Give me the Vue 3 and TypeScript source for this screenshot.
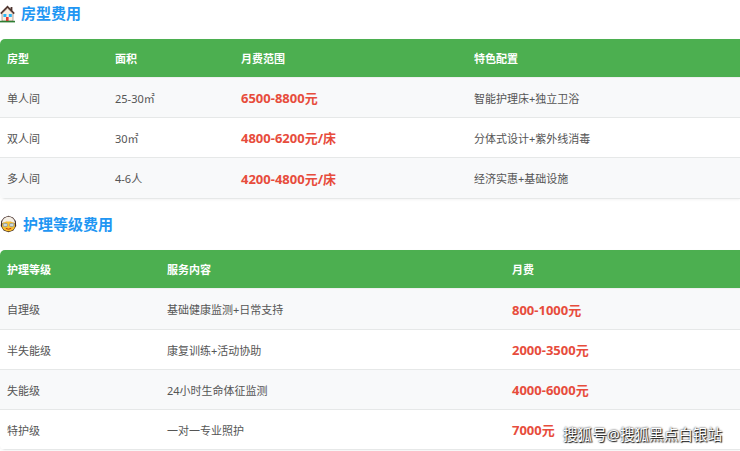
<script setup lang="ts">
interface Row { cells: string[]; price: number }
const t1: Row[] = [
  { cells: ['单人间', '25-30㎡', '6500-8800元', '智能护理床+独立卫浴'], price: 2 },
  { cells: ['双人间', '30㎡', '4800-6200元/床', '分体式设计+紫外线消毒'], price: 2 },
  { cells: ['多人间', '4-6人', '4200-4800元/床', '经济实惠+基础设施'], price: 2 },
]
const t2: Row[] = [
  { cells: ['自理级', '基础健康监测+日常支持', '800-1000元'], price: 2 },
  { cells: ['半失能级', '康复训练+活动协助', '2000-3500元'], price: 2 },
  { cells: ['失能级', '24小时生命体征监测', '4000-6000元'], price: 2 },
  { cells: ['特护级', '一对一专业照护', '7000元'], price: 2 },
]
const h1 = ['房型', '面积', '月费范围', '特色配置']
const h2 = ['护理等级', '服务内容', '月费']
</script>

<template>
  <div class="page">
    <h2 class="title first">
      <svg class="ico" viewBox="0 0 16 18" width="16" height="18">
        <path d="M7.5 0.6 L0.2 8 L1.4 9.2 L7.5 3 L13.6 9.2 L14.8 8 L12.4 5.6 V2 H10.6 V3.8 Z" fill="#4e342e" />
        <path d="M2 8.6 L7.5 3.2 L13 8.6 V16 H2 Z" fill="#fbeee0" stroke="#6d4c41" stroke-width=".5" />
        <rect x="3.4" y="9" width="3" height="3" fill="#29b6f6" />
        <rect x="8.8" y="9" width="3" height="3" fill="#29b6f6" />
        <rect x="6" y="12" width="2.6" height="4" fill="#e53935" />
        <rect x="0" y="15.8" width="15" height="1.6" fill="#2e7d32" />
      </svg>
      <span>房型费用</span>
    </h2>
    <table class="tbl one">
      <thead><tr><th v-for="h in h1" :key="h">{{ h }}</th></tr></thead>
      <tbody>
        <tr v-for="r in t1" :key="r.cells[0]">
          <td v-for="(c, i) in r.cells" :key="i" :class="{ price: i === r.price }">{{ c }}</td>
        </tr>
      </tbody>
    </table>
    <h2 class="title second">
      <svg class="ico" viewBox="0 0 17 18" width="17" height="18">
        <path d="M8.5 0.8 L13 2.4 L15.8 6 L16.2 11 L13.4 15.4 L8.5 17.2 L3.6 15.4 L0.8 11 L1.2 6 L4 2.4 Z" fill="#3e2723" />
        <path d="M8.5 6 C12 6 15 7 15 10.4 C15 13.8 12 16.2 8.5 16.2 C5 16.2 2 13.8 2 10.4 C2 7 5 6 8.5 6 Z" fill="#fbc02d" />
        <path d="M2 8.6 C2 4 5.4 1.8 8.5 1.8 C11.6 1.8 15 4 15 8.6 C13 7.2 11 6.6 8.5 6.6 C6 6.6 4 7.2 2 8.6 Z" fill="#f5efe6" />
        <rect x="3.2" y="8.4" width="4.2" height="3.2" rx="1.2" fill="#cfd8dc" stroke="#78909c" stroke-width=".7" />
        <rect x="9.6" y="8.4" width="4.2" height="3.2" rx="1.2" fill="#cfd8dc" stroke="#78909c" stroke-width=".7" />
        <path d="M5.8 13.4 Q8.5 15 11.2 13.4" fill="none" stroke="#bf360c" stroke-width="1" />
      </svg>
      <span>护理等级费用</span>
    </h2>
    <table class="tbl two">
      <thead><tr><th v-for="h in h2" :key="h">{{ h }}</th></tr></thead>
      <tbody>
        <tr v-for="r in t2" :key="r.cells[0]">
          <td v-for="(c, i) in r.cells" :key="i" :class="{ price: i === r.price }">{{ c }}</td>
        </tr>
      </tbody>
    </table>
    <div class="mark">搜狐号@搜狐黑点白银站</div>
  </div>
</template>

<style>
html, body { margin: 0; background: #fff; overflow: hidden; }
</style>

<style scoped>
.page {
  position: relative;
  width: 740px;
  height: 451px;
  overflow: hidden;
  font-family: "Noto Sans", "Noto Sans CJK SC", sans-serif;
  color: #333;
}
.title {
  margin: 0;
  display: flex;
  align-items: flex-start;
  font-size: 15px;
  line-height: 20px;
  font-weight: 700;
  color: #2196f3;
  box-sizing: border-box;
}
.title.first { padding-top: 3px; height: 39px; gap: 5px; }
.title.second { padding-top: 15px; height: 51px; gap: 6px; }
.first .ico { margin-top: 2px; }
.second .ico { margin-top: 1px; }
.ico { flex: none; }
.tbl {
  width: 740px;
  table-layout: fixed;
  border-collapse: separate;
  border-spacing: 0;
  border-radius: 5px 0 0 5px;
  overflow: hidden;
  font-size: 11px;
  box-shadow: 0 1px 3px rgba(0, 0, 0, 0.05);
}
.tbl th {
  height: 38px;
  padding: 0 0 0 7px;
  background: #4caf50;
  color: #fff;
  font-weight: 700;
  text-align: left;
  border-bottom: 1px solid #eef0f0;
}
.tbl td {
  height: 39px;
  padding: 0 0 0 7px;
  color: #555;
  border-bottom: 1px solid #e6e8e8;
}
.one tbody tr:last-child td { height: 40px; }
.two tbody tr:first-child td { height: 40px; }
.tbl tbody tr:nth-child(odd) td { background: #f8f9fa; }
.tbl td.price {
  color: #e74c3c;
  font-size: 13px;
  font-weight: 700;
}
.one th:nth-child(1) { width: 101px; }
.one th:nth-child(2) { width: 119px; }
.one th:nth-child(3) { width: 226px; }
.two th:nth-child(1) { width: 153px; }
.two th:nth-child(2) { width: 338px; }
.mark {
  position: absolute;
  left: 563px;
  top: 424px;
  font-size: 14.6px;
  line-height: 20px;
  color: #fff;
  white-space: nowrap;
  text-shadow: 0 0 2px #000, 1px 1px 1px #222;
}
</style>
